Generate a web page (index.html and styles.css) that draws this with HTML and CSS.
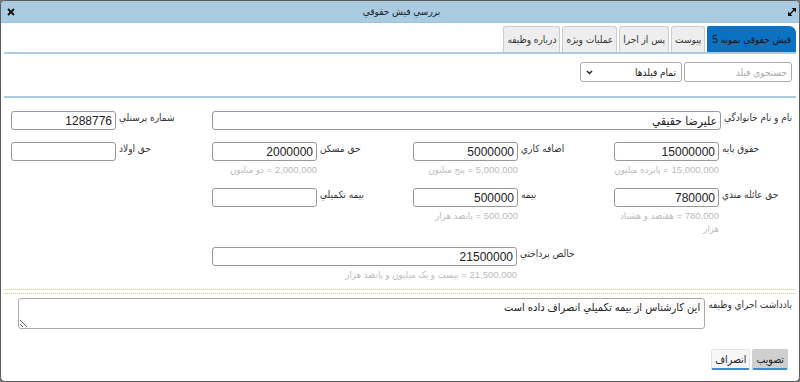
FILE: index.html
```html
<!DOCTYPE html>
<html lang="fa" dir="rtl">
<head>
    <meta charset="UTF-8">
    <title>بررسي فيش حقوقي</title>
    <link rel="stylesheet" href="styles.css">
</head>
<body>

<div class="dialog">
    <div class="titlebar">
        <span class="tb-icon">
            <svg width="10" height="10" viewBox="0 0 10 10"><path d="M2.2 7.8L7.8 2.2" stroke="#111" stroke-width="1.4"/><path d="M4.6 1H9V5.4Z" fill="#111"/><path d="M1 4.6V9H5.4Z" fill="#111"/></svg>
        </span>
        <span class="title">بررسي فيش حقوقي</span>
        <span class="tb-icon">
            <svg width="8" height="8" viewBox="0 0 8 8"><path d="M1 1L7 7M7 1L1 7" stroke="#111" stroke-width="1.8"/></svg>
        </span>
    </div>

    <div class="tabs">
        <div class="tab active">فيش حقوقي نمونه 5</div>
        <div class="tab">پيوست</div>
        <div class="tab">پس از اجرا</div>
        <div class="tab">عمليات ويژه</div>
        <div class="tab">درباره وظيفه</div>
    </div>

    <div class="toolbar">
        <input type="text" class="search" placeholder="جستجوی فیلد">
        <div class="select-wrap">
            <select class="filter">
                <option>تمام فيلدها</option>
            </select>
            <svg class="chevron" width="7" height="5" viewBox="0 0 7 5"><path d="M1 1l2.5 2.5L6 1" fill="none" stroke="#222" stroke-width="1.5"/></svg>
        </div>
    </div>

    <div class="form-grid">
        <div class="field wide">
            <label>نام و نام خانوادگي</label>
            <div class="control"><input type="text" value="عليرضا حقيقي"></div>
        </div>
        <div class="field">
            <label>شماره پرسنلي</label>
            <div class="control"><input type="text" value="1288776"></div>
        </div>

        <div class="field">
            <label>حقوق پايه</label>
            <div class="control">
                <input type="text" value="15000000">
                <div class="help">15,000,000 = پانزده ميليون</div>
            </div>
        </div>
        <div class="field">
            <label>اضافه كاري</label>
            <div class="control">
                <input type="text" value="5000000">
                <div class="help">5,000,000 = پنج ميليون</div>
            </div>
        </div>
        <div class="field">
            <label>حق مسكن</label>
            <div class="control">
                <input type="text" value="2000000">
                <div class="help">2,000,000 = دو ميليون</div>
            </div>
        </div>
        <div class="field">
            <label>حق اولاد</label>
            <div class="control"><input type="text" value=""></div>
        </div>

        <div class="field">
            <label>حق عائله مندي</label>
            <div class="control">
                <input type="text" value="780000">
                <div class="help">780,000 = هفتصد و هشتاد هزار</div>
            </div>
        </div>
        <div class="field">
            <label>بيمه</label>
            <div class="control">
                <input type="text" value="500000">
                <div class="help">500,000 = پانصد هزار</div>
            </div>
        </div>
        <div class="field">
            <label>بيمه تكميلي</label>
            <div class="control"><input type="text" value=""></div>
        </div>
        <div class="field"></div>

        <div class="field total">
            <label>خالص پرداختي</label>
            <div class="control long">
                <input type="text" value="21500000">
                <div class="help">21,500,000 = بيست و يک ميليون و پانصد هزار</div>
            </div>
        </div>
    </div>

    <div class="separator"></div>

    <div class="note">
        <label>يادداشت اجراي وظيفه</label>
        <textarea>اين كارشناس از بيمه تكميلي انصراف داده است</textarea>
    </div>

    <div class="actions">
        <button type="button" class="btn btn-primary">تصويب</button>
        <button type="button" class="btn">انصراف</button>
    </div>
</div>

</body>
</html>
```

FILE: styles.css
```css
body {
    margin: 0;
    background-color: #777;
    font-family: "Liberation Sans", "DejaVu Sans Condensed", "DejaVu Sans", sans-serif;
    font-size: 11px;
    color: #333;
}
.dialog {
    width: 800px;
    height: 382px;
    box-sizing: border-box;
    border: 1px solid #5a5a5a;
    border-radius: 5px;
    background-color: #fff;
    overflow: hidden;
}

/* Title bar */
.titlebar {
    height: 21px;
    background-color: #a9cce3; /* Light blue */
    border-bottom: 1px solid #9dc3de;
    display: flex;
    align-items: center;
    justify-content: space-between;
    padding: 0 1px 0 4px;
}
.title {
    font-size: 10px;
    color: #222;
}
.tb-icon {
    width: 12px;
    display: flex;
    justify-content: center;
}

/* Tabs */
.tabs {
    display: flex;
    gap: 2px;
    margin: 3px 3px 0;
    border-bottom: 2px solid #a9cce3;
}
.tab {
    height: 26px;
    box-sizing: border-box;
    padding: 0 3px;
    line-height: 25px;
    font-size: 10px;
    background-color: #eee;
    border: 1px solid #ccc;
    border-bottom: none;
    border-radius: 3px 3px 0 0;
    color: #333;
    white-space: nowrap;
}
.tab.active {
    padding: 0 4px;
    background-color: #0b72c3; /* Blue */
    border-color: #0b72c3;
    border-radius: 2px 7px 0 0;
    color: #111;
}

/* Search row */
.toolbar {
    display: flex;
    gap: 2px;
    margin: 0 3px;
    padding: 8px 4px 14px;
    border-bottom: 2px solid #a9cce3;
}
.toolbar input,
.toolbar select {
    height: 20px;
    box-sizing: border-box;
    border: 1px solid #aaa;
    border-radius: 3px;
    font-family: inherit;
    font-size: 10px;
    color: #222;
    background-color: #fff;
}
.search {
    width: 108px;
    padding: 0 4px;
}
.search::placeholder {
    color: #aaa;
}
.select-wrap {
    position: relative;
}
.filter {
    width: 102px;
    padding: 0 5px 0 14px;
    appearance: none;
    -webkit-appearance: none;
}
.chevron {
    position: absolute;
    left: 6px;
    top: 8px;
    pointer-events: none;
}

/* Fields */
.form-grid {
    display: grid;
    grid-template-columns: 178px 201px 201px 1fr;
    row-gap: 12px;
    padding: 13px 7px 0 10px;
}
.field {
    display: flex;
    gap: 3px;
    justify-content: flex-end;
    align-items: flex-start;
}
.field label {
    white-space: nowrap;
    padding-top: 1px;
    font-size: 10px;
    color: #333;
}
.field.wide {
    grid-column: 1 / span 3;
}
.field.total {
    grid-column: 2 / span 2;
}
.control {
    width: 105px;
}
.field.wide .control {
    flex: 1;
}
.control.long {
    width: 305px;
}
.control input {
    width: 100%;
    height: 19px;
    box-sizing: border-box;
    padding: 0 3px;
    border: 1px solid #999;
    border-radius: 3px;
    font-family: inherit;
    font-size: 12px;
    color: #222;
}
.help {
    font-size: 9.5px;
    line-height: 13px;
    margin: 2px 0 0 -8px;
    color: #bbb;
}

/* Note */
.separator {
    margin: 8px 3px 0;
    height: 3px;
    border-top: 1px solid #dde6c2;
    border-bottom: 1px dotted #c3d687;
}
.note {
    display: flex;
    gap: 3px;
    padding: 4px 7px 0 17px;
}
.note label {
    white-space: nowrap;
    padding-top: 1px;
    font-size: 10px;
}
.note textarea {
    flex: 1;
    height: 31px;
    box-sizing: border-box;
    padding: 2px 4px;
    border: 1px solid #aaa;
    border-radius: 3px;
    font-family: inherit;
    font-size: 11px;
    color: #222;
    resize: vertical;
}

/* Buttons */
.actions {
    display: flex;
    gap: 2px;
    padding: 20px 11px 0;
}
.btn {
    height: 21px;
    padding: 0 3px;
    font-family: inherit;
    font-size: 10.5px;
    color: #222;
    background-color: #f6f6f6;
    border: 1px solid #e4e4e4;
    border-bottom: 2px solid #3d8ad0;
    border-radius: 2px;
}
.btn-primary {
    background-color: #cfcfcf;
    border-color: #cfcfcf;
    border-bottom-color: #3d8ad0;
}
```
